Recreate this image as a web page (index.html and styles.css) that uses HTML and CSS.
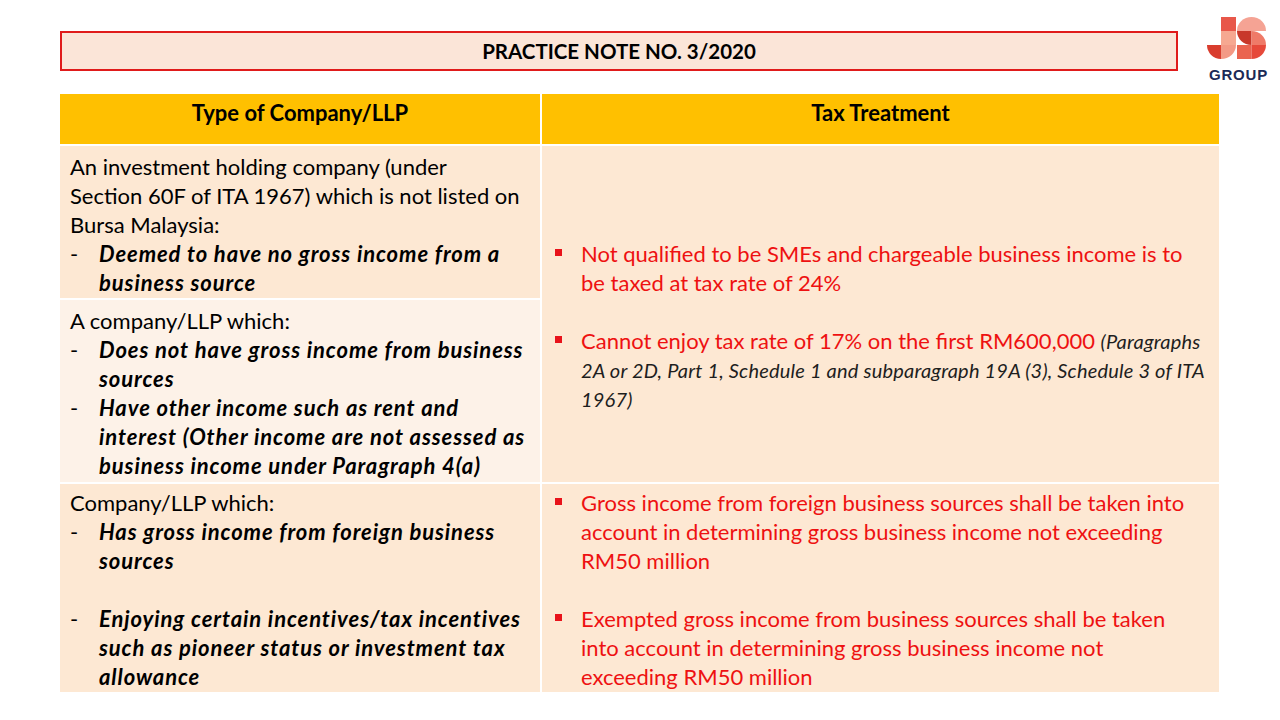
FILE: index.html
```html
<!DOCTYPE html>
<html lang="en">
<head>
<meta charset="utf-8">
<title>Practice Note No. 3/2020</title>
<link rel="stylesheet" href="styles.css">
</head>
<body>
<div class="slide">
  <header class="top">
    <div class="title-box">PRACTICE NOTE NO. 3/2020</div>
    <div class="logo">
      <svg class="logo-mark" width="66" height="46" viewBox="0 0 66 46">
        <!-- J -->
        <rect x="17" y="3" width="15" height="14" fill="#e8574a"/>
        <rect x="17" y="17" width="15" height="14" fill="#f6a891"/>
        <path d="M17,31 H32 A15,14 0 0 1 17,45 Z" fill="#f39a86"/>
        <path d="M17,31 H3 A14,14 0 0 0 17,45 Z" fill="#d93d2e"/>
        <!-- S -->
        <path d="M33,17 A14.5,14 0 0 1 62,17 Z" fill="#f5a394"/>
        <path d="M47.5,17 H33 A14.5,14 0 0 0 47.5,31 Z" fill="#c8382a"/>
        <path d="M47.5,31 V17 A14.5,14 0 0 1 62,31 Z" fill="#ef7a68"/>
        <rect x="33" y="31" width="14.5" height="14" fill="#ea6450"/>
        <path d="M47.5,31 H62 A14.5,14 0 0 1 47.5,45 Z" fill="#e6493a"/>
      </svg>
      <div class="logo-text">GROUP</div>
    </div>
  </header>

  <div class="table">
    <div class="cell head">Type of Company/LLP</div>
    <div class="cell head">Tax Treatment</div>

    <div class="cell left band">
      <p>An investment holding company (under<br>Section 60F of ITA 1967) which is not listed on<br>Bursa Malaysia:</p>
      <div class="dash"><span class="mark">-</span><span class="em">Deemed to have no gross income from a<br>business source</span></div>
    </div>

    <div class="cell right span band">
      <div class="bullet"><span class="sq"></span><span class="red">Not qualified to be SMEs and chargeable business income is to<br>be taxed at tax rate of 24%</span></div>
      <div class="spacer"></div>
      <div class="bullet"><span class="sq"></span><span><span class="red">Cannot enjoy tax rate of 17% on the first RM600,000 </span><span class="ref">(Paragraphs<br>2A or 2D, Part 1, Schedule 1 and subparagraph 19A (3), Schedule 3 of ITA<br>1967)</span></span></div>
    </div>

    <div class="cell left light">
      <p>A company/LLP which:</p>
      <div class="dash"><span class="mark">-</span><span class="em">Does not have gross income from business<br>sources</span></div>
      <div class="dash"><span class="mark">-</span><span class="em">Have other income such as rent and<br>interest (Other income are not assessed as<br>business income under Paragraph 4(a)</span></div>
    </div>

    <div class="cell left band last">
      <p>Company/LLP which:</p>
      <div class="dash"><span class="mark">-</span><span class="em">Has gross income from foreign business<br>sources</span></div>
      <div class="spacer"></div>
      <div class="dash"><span class="mark">-</span><span class="em">Enjoying certain incentives/tax incentives<br>such as pioneer status or investment tax<br>allowance</span></div>
    </div>

    <div class="cell right band last">
      <div class="bullet"><span class="sq"></span><span class="red">Gross income from foreign business sources shall be taken into<br>account in determining gross business income not exceeding<br>RM50 million</span></div>
      <div class="spacer"></div>
      <div class="bullet"><span class="sq"></span><span class="red">Exempted gross income from business sources shall be taken<br>into account in determining gross business income not<br>exceeding RM50 million</span></div>
    </div>
  </div>
</div>
</body>
</html>
```

FILE: styles.css
```css
html, body {
  margin: 0;
  padding: 0;
  background: #ffffff;
}

.slide {
  width: 1280px;
  height: 720px;
  box-sizing: border-box;
  padding: 12px 0 0 60px;
  font-family: Lato, "Open Sans", sans-serif;
  color: #000000;
  overflow: hidden;
}

.top {
  display: flex;
  align-items: flex-start;
  height: 70px;
}

.title-box {
  box-sizing: border-box;
  width: 1118px;
  height: 40px;
  margin-top: 19px;
  border: 2px solid #e01b1b;
  background: #fbe5d8;
  display: flex;
  align-items: center;
  justify-content: center;
  font-weight: 700;
  font-size: 20.5px;
  padding-bottom: 1px;
}

.logo {
  margin-left: 26px;
  margin-top: 2px;
  width: 66px;
  display: flex;
  flex-direction: column;
  align-items: center;
}

.logo-mark {
  display: block;
}

.logo-text {
  font-family: "Liberation Sans", Arial, sans-serif;
  font-weight: 700;
  font-size: 15px;
  line-height: 16px;
  letter-spacing: 0.8px;
  color: #1b2a57;
  margin-top: 7px;
  margin-left: 3px;
}

.table {
  margin-top: 12px;
  display: grid;
  grid-template-columns: 480px 677px;
  grid-template-rows: 50px 152px 182px 208px;
  gap: 2px;
}

.cell {
  box-sizing: border-box;
  font-size: 22px;
  line-height: 29px;
}

.cell p {
  margin: 0;
}

.head {
  background: #ffc000;
  font-weight: 700;
  font-size: 22px;
  text-align: center;
  padding-top: 4px;
}

.band {
  background: #fde8d3;
}

.light {
  background: #fdf2e8;
}

.left {
  padding: 6px 10px 0 10px;
}

.left.last {
  padding-top: 4px;
}

.right {
  padding: 4px 8px 0 13px;
}

.right.span {
  grid-row: span 2;
  padding-top: 93px;
}

.dash {
  display: flex;
}

.mark {
  width: 29px;
  flex: none;
}

.em {
  font-weight: 700;
  font-style: italic;
  letter-spacing: 0.9px;
}

.spacer {
  height: 29px;
}

.bullet {
  display: flex;
}

.sq {
  flex: none;
  width: 7px;
  height: 7px;
  background: #e8121a;
  margin: 10px 19px 0 0;
}

.red {
  color: #ee1111;
}

.ref {
  font-style: italic;
  font-size: 20px;
  color: #1e1e1e;
  letter-spacing: 0.2px;
  line-height: 27px;
}
```
